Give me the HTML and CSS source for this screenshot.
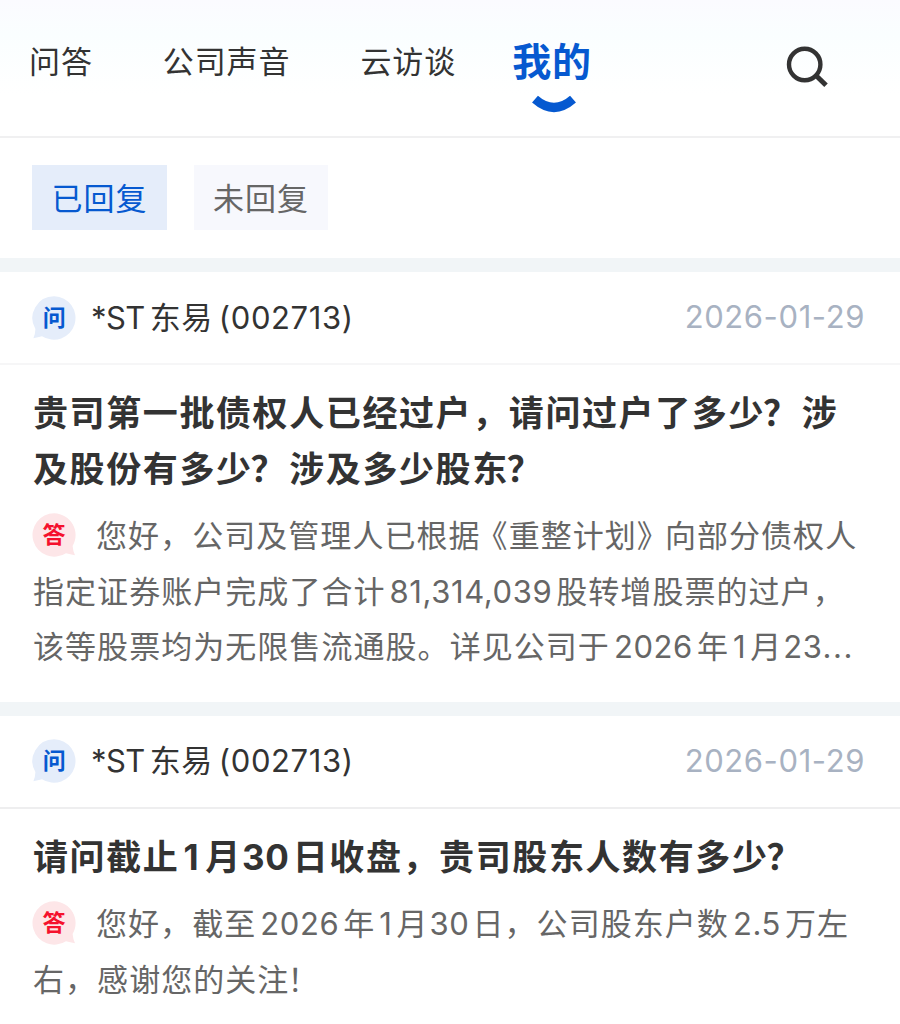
FILE: index.html
```html
<!DOCTYPE html>
<html lang="zh-CN">

<head>
    <meta charset="UTF-8">
    <meta name="viewport" content="width=device-width, initial-scale=1.0">
    <title>我的问答</title>
    <link rel="stylesheet" href="styles.css">
</head>

<body>

    <header class="top">
        <nav class="nav">
            <a class="nav-item">问答</a>
            <a class="nav-item">公司声音</a>
            <a class="nav-item">云访谈</a>
            <a class="nav-item active">我的
                <svg class="smile" width="44" height="18" viewBox="0 0 44 18">
                    <path d="M3 4.2Q22 20.8 41 4.2" fill="none" stroke="#0659d0" stroke-width="9" />
                </svg>
            </a>
        </nav>
        <svg class="search" width="44" height="44" viewBox="0 0 44 44" fill="none" stroke="#333">
            <circle cx="19.7" cy="19.5" r="15.7" stroke-width="4.4" />
            <path d="M31 30.5L41 40.3" stroke-width="5" />
        </svg>
    </header>

    <div class="filter">
        <button class="filter-btn on">已回复</button>
        <button class="filter-btn">未回复</button>
    </div>

    <!-- question 1 -->
    <section class="card">
        <div class="card-head light">
            <svg class="badge" width="44" height="44" viewBox="0 0 44 44">
                <path d="M22.3 0.3A21.7 21.7 0 1 1 10 40.2Q6 41 1.4 42.3Q3.3 38 3.4 33A21.7 21.7 0 0 1 22.3 0.3Z" fill="#e5edfa" />
                <text x="22.2" y="30" class="badge-text ask">问</text>
            </svg>
            <span class="stock"><span class="st">*ST</span><span class="cn">东易</span>(002713)</span>
            <span class="date">2026-01-29</span>
        </div>
        <div class="card-body">
            <h2 class="question">贵司第一批债权人已经过户，请问过户了多少<span class="mark">？</span>涉<br>及股份有多少<span class="mark">？</span>涉及多少股东<span class="mark">？</span></h2>
            <p class="answer">
                <svg class="badge" width="44" height="44" viewBox="0 0 44 44">
                    <path d="M22.3 0.3A21.7 21.7 0 1 0 34 40.2Q38 41 43 42.3Q41 38 40.6 33A21.7 21.7 0 0 0 22.3 0.3Z" fill="#fde6e8" />
                    <text x="22" y="30" class="badge-text reply">答</text>
                </svg>您好，公司及管理人已根据<span class="book">《重整计划》</span>向部分债权人<br>指定证券账户完成了合计<span class="num">81,314,039</span>股转增股票的过户，<br>该等股票均为无限售流通股。详见公司于<span class="num">2026</span>年<span class="num">1</span>月<span class="num day">23<span class="dots">...</span></span>
            </p>
        </div>
    </section>

    <!-- question 2 -->
    <section class="card">
        <div class="card-head">
            <svg class="badge" width="44" height="44" viewBox="0 0 44 44">
                <path d="M22.3 0.3A21.7 21.7 0 1 1 10 40.2Q6 41 1.4 42.3Q3.3 38 3.4 33A21.7 21.7 0 0 1 22.3 0.3Z" fill="#e5edfa" />
                <text x="22.2" y="30" class="badge-text ask">问</text>
            </svg>
            <span class="stock"><span class="st">*ST</span><span class="cn">东易</span>(002713)</span>
            <span class="date">2026-01-29</span>
        </div>
        <div class="card-body">
            <h2 class="question">请问截止<span class="num">1</span>月<span class="num day">30</span>日收盘，贵司股东人数有多少<span class="mark">？</span></h2>
            <p class="answer">
                <svg class="badge" width="44" height="44" viewBox="0 0 44 44">
                    <path d="M22.3 0.3A21.7 21.7 0 1 0 34 40.2Q38 41 43 42.3Q41 38 40.6 33A21.7 21.7 0 0 0 22.3 0.3Z" fill="#fde6e8" />
                    <text x="22" y="30" class="badge-text reply">答</text>
                </svg>您好，截至<span class="num">2026</span>年<span class="num">1</span>月<span class="num day">30</span>日，公司股东户数<span class="num">2.5</span>万左<br>右，感谢您的关注<span class="mark">！</span>
            </p>
        </div>
    </section>

</body>

</html>
```
FILE: styles.css
```css
* {
    box-sizing: border-box;
}

body {
    margin: 0;
    height: 1024px;
    overflow: hidden;
    background: #fff;
    color: #333;
    font-family: Inter, "Noto Sans CJK SC", sans-serif;
    font-size: 31px;
    letter-spacing: 1.05px;
    white-space: nowrap;
    text-spacing-trim: space-all;
}

/* top navigation */
.top {
    display: flex;
    justify-content: space-between;
    height: 138px;
    padding: 0 71px 0 29px;
    border-bottom: 2px solid #f0f0f1;
    background: linear-gradient(#fbfbff 0, #fafeff 35px, #fff 95px);
}

.nav {
    display: flex;
}

.nav-item {
    margin-right: 70px;
    line-height: 124px;
    letter-spacing: 0.9px;
}

.nav-item:nth-child(3) {
    margin-right: 56px;
}

.nav-item.active {
    position: relative;
    margin-right: 0;
    color: #0659d0;
    font-size: 39px;
    font-weight: 700;
}

.smile {
    position: absolute;
    left: 20px;
    top: 95px;
}

.search {
    margin-top: 45px;
}

/* reply filter */
.filter {
    display: flex;
    gap: 27px;
    height: 120px;
    padding: 27px 32px 0;
}

.filter-btn {
    width: 134px;
    height: 65px;
    padding: 0 0 3px;
    border: 0;
    background: #f7f8fd;
    color: #666;
    font: inherit;
    letter-spacing: 1px;
}

.filter-btn.on {
    width: 135px;
    background: #e5edfa;
    color: #0659d0;
}

/* question cards */
.card {
    border-top: 14px solid #f1f5f7;
    padding-bottom: 26px;
}

.card-head {
    display: flex;
    align-items: center;
    height: 93px;
    padding: 0 35px 0 32px;
    border-bottom: 2px solid #eeeeef;
}

.card-head.light {
    border-color: #f6f6f7;
}

.stock {
    margin-left: 15px;
    padding-bottom: 5px;
    letter-spacing: 0.6px;
}

.st {
    letter-spacing: -0.6px;
}

.cn {
    margin: 0 6px 0 5px;
}

.date {
    margin-left: auto;
    padding-bottom: 2px;
    color: #a8b2c2;
    letter-spacing: 0.6px;
}

.card-body {
    padding: 21px 33px 0;
}

.question {
    margin: 0 0 11px;
    font-size: 35px;
    font-weight: 700;
    line-height: 55.5px;
    letter-spacing: 1.6px;
}

.answer {
    margin: 0 0 1px;
    color: #666;
    line-height: 55.5px;
}

.badge {
    flex: none;
}

.answer .badge {
    margin: 0 20px 0 -1px;
    vertical-align: -10px;
}

.badge-text {
    font-size: 23px;
    font-weight: 700;
    letter-spacing: 0;
    text-anchor: middle;
}

.ask {
    fill: #0659d0;
}

.reply {
    fill: #f5112d;
}

/* digits inside chinese text */
.num {
    margin: 0 4px;
    letter-spacing: 0.6px;
}

.num.day {
    margin: 0 3px 0 1px;
}

.dots {
    letter-spacing: 1.6px;
}

.question .num {
    margin-right: 6px;
    letter-spacing: 0.8px;
}

.question .num.day {
    margin: 0 3px 0 0;
}

.book {
    margin: 0 -4px;
}

/* full width marks sit a little to the left */
.mark {
    margin: 0 2px 0 -2px;
}
```
